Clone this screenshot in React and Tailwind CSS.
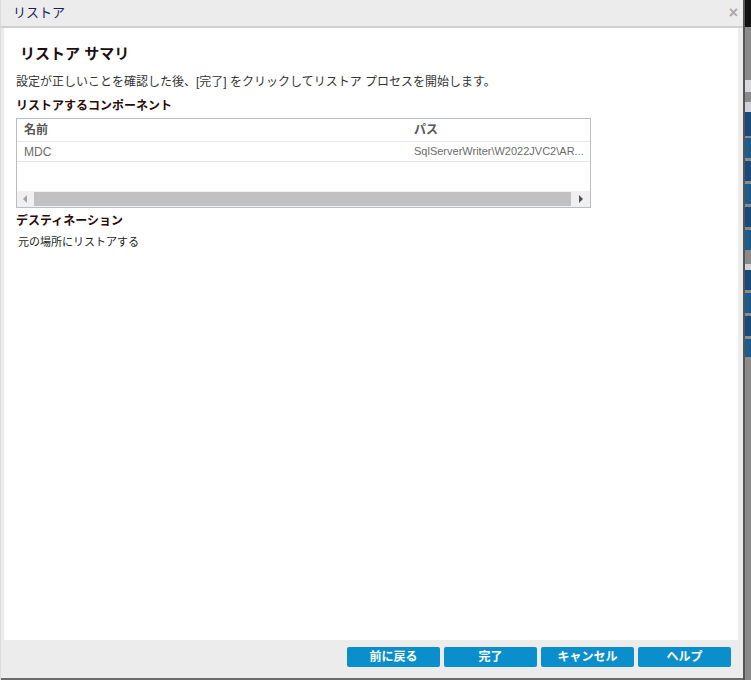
import React from "react";

const font = {
  fontFamily: '"Liberation Sans", "Noto Sans CJK JP", sans-serif',
};

const Button = ({ children }) => (
  <button className="w-[93px] h-[20px] rounded-[2px] bg-[#0b8fcc] text-white text-[12px] font-bold leading-[20px]">
    {children}
  </button>
);

const App = () => {
  return (
    <div
      className="w-[751px] h-[680px] flex overflow-hidden bg-[#7b7b7b]"
      style={font}
    >
      {/* dialog */}
      <div className="w-[743px] h-[680px] flex flex-col bg-[#ececec] border-l border-[#dcdcdc]">
        {/* title bar */}
        <div className="h-[28px] shrink-0 flex items-center justify-between border-b-2 border-[#cfcfcf] pl-[12px] pr-[5px]">
          <span className="text-[13px] text-[#1b1b5e]">リストア</span>
          <span className="text-[16px] leading-none text-[#a8a8a8] font-bold">×</span>
        </div>

        {/* body */}
        <div className="flex-1 flex flex-col bg-white ml-[3px] mr-[5px] pt-[16px] pl-[12px]">
          <h2 className="pl-[4px] text-[15px] font-semibold text-[#1a1010] leading-[20px]">
            リストア サマリ
          </h2>
          <p className="mt-[10px] text-[12px] text-[#333] leading-[16px]">
            設定が正しいことを確認した後、[完了] をクリックしてリストア プロセスを開始します。
          </p>
          <h3 className="mt-[8px] text-[12px] font-bold text-[#2a0a0a] leading-[16px]">
            リストアするコンポーネント
          </h3>

          {/* table */}
          <div className="mt-[4px] w-[575px] h-[90px] border border-[#b9bdc6] flex flex-col">
            <div className="h-[23px] flex items-center text-[12px] font-bold text-[#555] border-b border-[#e6e6e6]">
              <span className="w-[397px] shrink-0 pl-[7px]">名前</span>
              <span>パス</span>
            </div>
            <div className="h-[20px] flex items-center text-[11px] text-[#6b6b6b] border-b border-[#e6e6e6]">
              <span className="w-[397px] shrink-0 pl-[7px] text-[12px]">MDC</span>
              <span className="whitespace-nowrap">SqlServerWriter\W2022JVC2\AR...</span>
            </div>
            <div className="flex-1" />
            <div className="h-[16px] flex items-center bg-[#f0f0f0]">
              <div className="w-[17px] flex justify-center">
                <svg width="5" height="8" viewBox="0 0 5 8">
                  <path d="M4 0 L0 4 L4 8 Z" fill="#a3a3a3" />
                </svg>
              </div>
              <div className="w-[537px] h-[14px] bg-[#c1c1c1]" />
              <div className="flex-1 flex justify-center">
                <svg width="5" height="8" viewBox="0 0 5 8">
                  <path d="M1 0 L5 4 L1 8 Z" fill="#505050" />
                </svg>
              </div>
            </div>
          </div>

          <h3 className="mt-[5px] text-[12px] font-bold text-[#2a0a0a] leading-[16px]">
            デスティネーション
          </h3>
          <p className="mt-[6px] pl-[2px] text-[11px] text-[#222] leading-[14px]">
            元の場所にリストアする
          </p>
        </div>

        {/* footer */}
        <div className="h-[40px] shrink-0 flex items-start justify-end gap-[4px] pt-[7px] pr-[12px] border-b-2 border-[#6b6b6b]">
          <Button>前に戻る</Button>
          <Button>完了</Button>
          <Button>キャンセル</Button>
          <Button>ヘルプ</Button>
        </div>
      </div>

      {/* background app edge */}
      <div className="w-[8px] h-[680px] flex flex-col border-l-2 border-[#555]">
        <div className="h-[27px] bg-[#111]" />
        <div className="h-[53px] bg-[#8a8a8a]" />
        <div className="h-[12px] bg-[#d8d8dc]" />
        <div className="h-[10px] bg-[#8a8a8a]" />
        <div className="h-[10px] bg-[#d0d0d8]" />
        <div className="h-[24px] bg-[#1a4a7a]" />
        <div className="h-[2px] bg-[#8a8a8a]" />
        <div className="h-[20px] bg-[#1d5b8c]" />
        <div className="h-[3px] bg-[#8a8a8a]" />
        <div className="h-[20px] bg-[#1a4a7a]" />
        <div className="h-[3px] bg-[#8a8a8a]" />
        <div className="h-[20px] bg-[#1d5b8c]" />
        <div className="h-[3px] bg-[#8a8a8a]" />
        <div className="h-[20px] bg-[#1a4a7a]" />
        <div className="h-[3px] bg-[#8a8a8a]" />
        <div className="h-[20px] bg-[#1d5b8c]" />
        <div className="h-[14px] bg-[#8a8a8a]" />
        <div className="h-[6px] bg-[#d0d0d8]" />
        <div className="h-[20px] bg-[#1a4a7a]" />
        <div className="h-[3px] bg-[#8a8a8a]" />
        <div className="h-[20px] bg-[#1d5b8c]" />
        <div className="h-[3px] bg-[#8a8a8a]" />
        <div className="h-[20px] bg-[#1a4a7a]" />
        <div className="h-[3px] bg-[#8a8a8a]" />
        <div className="h-[18px] bg-[#1d5b8c]" />
        <div className="flex-1 bg-[#8a8a8a]" />
      </div>
    </div>
  );
};

export default App;
